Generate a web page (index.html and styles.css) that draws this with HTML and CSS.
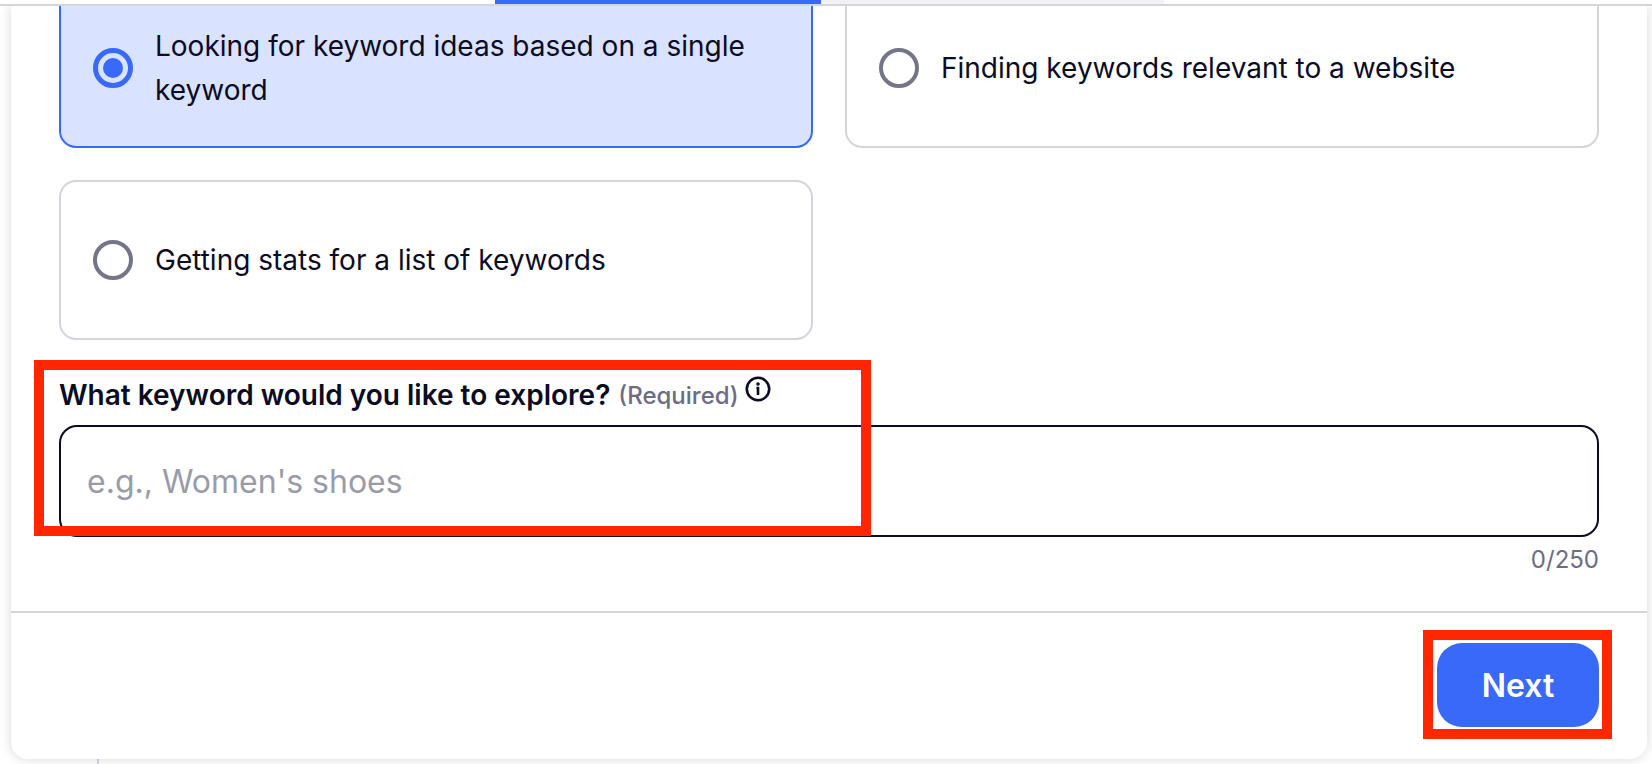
FILE: index.html
```html
<!DOCTYPE html>
<html lang="en">
<head>
<meta charset="utf-8">
<title>Keyword research</title>
<link rel="stylesheet" href="styles.css">
</head>
<body>
<div class="page">
  <header class="topbar">
    <div class="progress"><div class="progress-fill"></div></div>
  </header>
  <main class="card">
    <div class="scroll">
      <div class="scroll-inner">
        <div class="options">
          <label class="option option-selected">
            <span class="radio radio-on"><span class="radio-dot"></span></span>
            <span class="option-text">Looking for keyword ideas based on a single keyword</span>
          </label>
          <label class="option">
            <span class="radio"></span>
            <span class="option-text">Finding keywords relevant to a website</span>
          </label>
          <label class="option">
            <span class="radio"></span>
            <span class="option-text">Getting stats for a list of keywords</span>
          </label>
        </div>
        <div class="field">
          <div class="field-label">
            <span class="label-main">What keyword would you like to explore?</span>
            <span class="label-req">(Required)</span>
            <svg class="info" viewBox="0 0 26 26" width="26" height="26" aria-hidden="true">
              <circle cx="13" cy="13" r="11.2" fill="none" stroke="#0b0b24" stroke-width="2.6"/>
              <circle cx="13" cy="8" r="1.8" fill="#0b0b24"/>
              <path d="M11.4 12h1.6v7" fill="none" stroke="#0b0b24" stroke-width="2.6"/>
            </svg>
          </div>
          <div class="input">e.g., Women's shoes</div>
          <div class="counter">0/250</div>
        </div>
      </div>
    </div>
    <footer class="footer">
      <button class="next" type="button">Next</button>
    </footer>
  </main>
  <div class="rail"></div>
  <div class="mark mark-input"></div>
  <div class="mark mark-next"></div>
</div>
</body>
</html>
```

FILE: styles.css
```css
* { box-sizing: border-box; }
html, body { margin: 0; padding: 0; height: 100%; background: #fff; overflow: hidden; }
body { font-family: "Inter", "Liberation Sans", sans-serif; color: #0b0b24; }

.page { position: relative; width: 1652px; height: 764px; display: flex; flex-direction: column; overflow: hidden; }

.topbar { height: 6px; flex: none; border-bottom: 2px solid #d4d4dc; position: relative; z-index: 2; background: #fff; }
.progress { width: 669px; height: 4px; margin-left: 495px; background: #f1f1f6; }
.progress-fill { width: 326px; height: 4px; background: #3869f8; }

.card { flex: none; width: 1636px; height: 753px; margin-left: 11px; background: #fff; border-radius: 0 0 17px 17px; box-shadow: 0 0 12px rgba(11, 11, 36, 0.16); display: flex; flex-direction: column; clip-path: inset(0 -12px -12px -12px); }
.scroll { flex: none; height: 607px; overflow: hidden; border-bottom: 2px solid #d4d4dc; }
.scroll-inner { margin-top: -18px; padding: 0 48px; }

.options { display: grid; grid-template-columns: 754px 754px; column-gap: 32px; row-gap: 32px; }
.option { height: 160px; border: 2px solid #d4d4dc; border-radius: 17px; display: flex; align-items: center; gap: 22px; padding: 0 28px 0 32px; font-size: 28px; line-height: 44px; }
.option-selected { background: #d9e2fe; border-color: #3869f8; }
.radio { flex: none; width: 40px; height: 40px; border-radius: 50%; border: 4px solid #75758a; display: flex; align-items: center; justify-content: center; }
.radio-on { border: 5px solid #3869f8; }
.radio-dot { width: 20px; height: 20px; border-radius: 50%; background: #3869f8; }

.field { margin-top: 32px; }
.field-label { display: flex; align-items: flex-start; height: 53px; padding-top: 5px; line-height: 36px; }
.label-main { font-size: 28px; font-weight: 600; }
.label-req { font-size: 24px; color: #6c6c85; margin-left: 8px; font-weight: 500; line-height: 38px; }
.info { margin-left: 6px; margin-top: -1px; }

.input { height: 112px; border: 2px solid #0b0b24; border-radius: 18px; display: flex; align-items: center; padding: 0 26px; font-size: 32px; color: #9b9ba8; }
.counter { margin-top: 9px; text-align: right; font-size: 24px; line-height: 28px; color: #6c6c85; }

.footer { flex: 1; display: flex; justify-content: flex-end; align-items: flex-start; padding: 30px 48px 0 0; }
.next { width: 162px; height: 84px; border: none; border-radius: 25px; background: #3869f8; color: #fff; font-family: inherit; font-size: 32px; font-weight: 600; }

.rail { width: 2px; height: 5px; margin-left: 97px; background: #d4d4dc; flex: none; }

.mark { position: absolute; border: 10px solid #ff2600; pointer-events: none; }
.mark-input { left: 34px; top: 360px; width: 837px; height: 176px; }
.mark-next { left: 1423px; top: 630px; width: 189px; height: 109px; }
```
